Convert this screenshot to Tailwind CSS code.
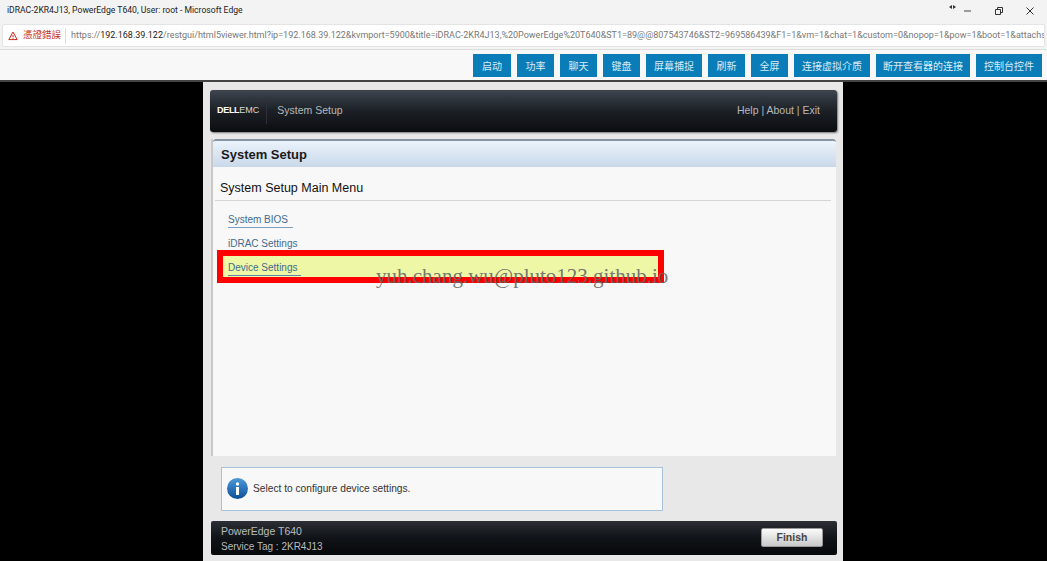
<!DOCTYPE html>
<html lang="zh">
<head>
  <meta charset="UTF-8" />
  <title>iDRAC-2KR4J13, PowerEdge T640, User: root - Microsoft Edge</title>
  <script src="https://cdn.jsdelivr.net/npm/@tailwindcss/browser@4"></script>
</head>
<body class="relative h-[561px] w-[1047px] overflow-hidden bg-black font-['Open_Sans','Noto_Sans_CJK_TC',sans-serif]">
  <!-- edge window chrome -->
  <div class="flex h-[24px] items-center justify-between bg-[#f3f3f3] pb-[3px] pl-[7px] font-['Roboto',sans-serif] text-[8.6px] text-[#222]">
    <span>iDRAC-2KR4J13, PowerEdge T640, User: root - Microsoft Edge</span>
    <div class="flex items-center text-[#333]">
      <svg class="mr-[8px] mb-[8px]" width="7" height="4" viewBox="0 0 7 4"><path d="M0 2 3 0v4zM7 2 4 0v4z" fill="#333"/></svg>
      <svg class="mr-[23px]" width="8" height="8" viewBox="0 0 8 8"><path d="M0 4h7" stroke="#444"/></svg>
      <svg class="mr-[23px]" width="8" height="8" viewBox="0 0 8 8" fill="none"><path d="M.5 2.5h5v5h-5zM2.5 2.5V.5h5v5h-2" stroke="#333"/></svg>
      <svg class="mr-[13px]" width="8" height="8" viewBox="0 0 8 8"><path d="M.5.5l7 7M7.5.5l-7 7" stroke="#333"/></svg>
    </div>
  </div>
  <div class="h-[26px] border-b border-[#ddd] bg-[#f3f3f3] px-[2px]">
    <div class="flex h-[23px] items-center overflow-hidden rounded-[2px] border border-[#e4e4e4] bg-white pl-[5px] font-['Roboto','Noto_Sans_CJK_TC',sans-serif] text-[9px] whitespace-nowrap">
      <svg class="mr-[5px] shrink-0" width="10" height="10" viewBox="0 0 10 10" fill="none"><path d="M5 1 .8 8.6h8.4zM5 4v2.4M5 7.2v.7" stroke="#c42b1c"/></svg>
      <span class="mr-[4px] shrink-0 text-[9.5px] text-[#c42b1c]">憑證錯誤</span>
      <span class="mr-[5px] h-[16px] w-px shrink-0 bg-[#ddd]"></span>
      <span class="text-[#777]">https://<span class="text-[#222]">192.168.39.122</span>/restgui/html5viewer.html?ip=192.168.39.122&amp;kvmport=5900&amp;title=iDRAC-2KR4J13,%20PowerEdge%20T640&amp;ST1=89@@807543746&amp;ST2=969586439&amp;F1=1&amp;vm=1&amp;chat=1&amp;custom=0&amp;nopop=1&amp;pow=1&amp;boot=1&amp;attachs</span>
    </div>
  </div>
  <!-- kvm toolbar -->
  <div class="flex h-[32px] items-start justify-end gap-[6px] border-b-2 border-[#444] bg-[#f8f8f8] pt-[4px] pr-[5px] font-['Noto_Sans_CJK_SC',sans-serif] text-[10px] text-[#d8ecf6]">
    <button class="h-[23px] w-[38px] bg-[#0a7cb8]">启动</button>
    <button class="h-[23px] w-[37px] bg-[#0a7cb8]">功率</button>
    <button class="h-[23px] w-[37px] bg-[#0a7cb8]">聊天</button>
    <button class="h-[23px] w-[37px] bg-[#0a7cb8]">键盘</button>
    <button class="h-[23px] w-[56px] bg-[#0a7cb8]">屏幕捕捉</button>
    <button class="h-[23px] w-[37px] bg-[#0a7cb8]">刷新</button>
    <button class="h-[23px] w-[37px] bg-[#0a7cb8]">全屏</button>
    <button class="h-[23px] w-[76px] bg-[#0a7cb8]">连接虚拟介质</button>
    <button class="h-[23px] w-[94px] bg-[#0a7cb8]">断开查看器的连接</button>
    <button class="h-[23px] w-[66px] bg-[#0a7cb8]">控制台控件</button>
  </div>
  <!-- remote console -->
  <div class="ml-[203px] h-[479px] w-[640px] bg-[#e8e8e8] pt-[8px] pl-[7px] font-['Liberation_Sans',sans-serif]">
    <div class="flex h-[42px] w-[627px] items-center justify-between rounded-[3px] bg-gradient-to-b from-[#3f4650] via-[#1c2026] to-[#0b0d10] pr-[17px] pl-[7px] text-[10.5px] text-[#b5b8bb] shadow-[1px_1px_2px_#777]">
      <div class="flex items-center">
        <span class="border-r border-[#2d3137] py-[6px] pr-[7px] text-[9px] text-[#d8d8d8]"><b class="tracking-[-0.3px] text-white">DELL</b>EMC</span>
        <span class="ml-[10px]">System Setup</span>
      </div>
      <span>Help | About | Exit</span>
    </div>

    <div class="mt-[7px] ml-px flex h-[317px] w-[625px] flex-col border-l-2 border-[#c8c8c8] bg-[#f8f8f8]">
      <div class="flex h-[28px] shrink-0 items-center rounded-t-[3px] border-t-2 border-[#8795a3] bg-gradient-to-b from-[#ebf3fb] to-[#c9d8e9] pt-px pl-[8px] text-[13px] font-bold text-[#1a1a1a]">System Setup</div>
      <div class="mr-[5px] ml-[2px] flex h-[34px] shrink-0 items-end border-b border-[#d4d4d4] pb-[4px] pl-[5px] text-[12.5px] leading-[15px] text-[#111]">System Setup Main Menu</div>
      <div class="flex flex-col pt-[8px] pl-[15px] text-[10px] text-[#3f6b8f]">
        <a class="h-[19px] w-fit border-b border-[#7c9fc3] pr-[5px] leading-[21px]">System BIOS</a>
        <a class="mt-[5px] h-[20px] w-fit leading-[22px]">iDRAC Settings</a>
      </div>
      <div class="mt-[-3px] ml-[4px] h-[33px] w-[447px] border-[6px] border-[#ff0000] bg-[#eef7a5] pl-[5px]">
        <a class="block h-[20px] w-fit border-b border-[#5f85a8] pr-[4px] text-[10px] leading-[24px] text-[#3f6b8f]">Device Settings</a>
      </div>
    </div>

    <div class="mt-[11px] ml-[11px] flex h-[44px] w-[442px] items-center border border-[#a9c2dc] bg-[#f8f8f8] pb-px pl-[5px] text-[10.2px] text-[#333]">
      <svg class="mr-[5px]" width="21" height="21" viewBox="0 0 21 21">
        <defs><linearGradient id="infoFill" x1="0" y1="0" x2="0" y2="1"><stop offset="0" stop-color="#4d9ad8"/><stop offset="1" stop-color="#0c4f9a"/></linearGradient></defs>
        <circle cx="10.5" cy="10.5" r="10.5" fill="url(#infoFill)"/>
        <circle cx="10.5" cy="6" r="1.7" fill="#fff"/>
        <rect x="9" y="9" width="3" height="8" fill="#fff"/>
      </svg>
      <span>Select to configure device settings.</span>
    </div>

    <div class="mt-[10px] ml-px flex h-[34px] w-[626px] items-center justify-between rounded-[2px] bg-gradient-to-b from-[#2c3036] via-[#101317] to-[#08090b] pr-[14px] pl-[10px] text-[10.5px] leading-[15px] text-[#b9bbbd]">
      <div class="pt-px">
        <div>PowerEdge T640</div>
        <div class="text-[10px]">Service Tag : 2KR4J13</div>
      </div>
      <button class="mb-[2px] h-[19px] w-[62px] rounded-[2px] border border-[#999] bg-gradient-to-b from-[#fbfbfb] to-[#c9c9c9] text-[10.5px] font-bold text-[#444]">Finish</button>
    </div>
  </div>
  <!-- watermark over the capture -->
  <div class="absolute top-[261px] left-[376px] font-['Liberation_Serif',serif] text-[21px] whitespace-nowrap text-[#666666]/90">yuh.chang.wu@pluto123.github.io</div>
</body>
</html>
